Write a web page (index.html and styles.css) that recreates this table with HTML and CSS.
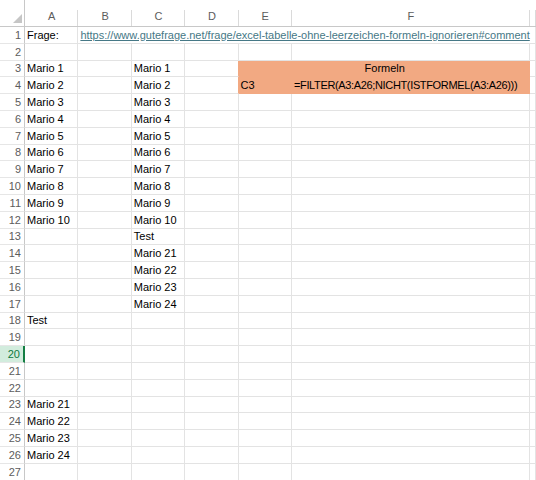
FILE: index.html
```html
<!DOCTYPE html>
<html>
<head>
<meta charset="utf-8">
<link rel="stylesheet" href="styles.css">
</head>
<body>
<div class="sheet">
  <div class="corner"><svg width="25" height="27" viewBox="0 0 25 27"><polygon points="22,14 22,23 13,23" fill="#c6c6c6"/></svg></div>
  <div class="ch">A</div><div class="ch">B</div><div class="ch">C</div><div class="ch">D</div><div class="ch">E</div><div class="ch">F</div><div class="ch"></div>

  <div class="rh">1</div><div class="c">Frage:</div><div class="c link span6">https://www.gutefrage.net/frage/excel-tabelle-ohne-leerzeichen-formeln-ignorieren#comment</div>

  <div class="rh">2</div><div class="c"></div><div class="c"></div><div class="c"></div><div class="c"></div><div class="c"></div><div class="c"></div><div class="c"></div>

  <div class="rh">3</div><div class="c">Mario 1</div><div class="c"></div><div class="c">Mario 1</div><div class="c pre-fill"></div><div class="c fill center span2">Formeln</div><div class="c"></div>

  <div class="rh">4</div><div class="c">Mario 2</div><div class="c"></div><div class="c">Mario 2</div><div class="c pre-fill"></div><div class="c fill">C3</div><div class="c fill formula">=FILTER(A3:A26;NICHT(ISTFORMEL(A3:A26)))</div><div class="c"></div>

  <div class="rh">5</div><div class="c">Mario 3</div><div class="c"></div><div class="c">Mario 3</div><div class="c"></div><div class="c"></div><div class="c"></div><div class="c"></div>
  <div class="rh">6</div><div class="c">Mario 4</div><div class="c"></div><div class="c">Mario 4</div><div class="c"></div><div class="c"></div><div class="c"></div><div class="c"></div>
  <div class="rh">7</div><div class="c">Mario 5</div><div class="c"></div><div class="c">Mario 5</div><div class="c"></div><div class="c"></div><div class="c"></div><div class="c"></div>
  <div class="rh">8</div><div class="c">Mario 6</div><div class="c"></div><div class="c">Mario 6</div><div class="c"></div><div class="c"></div><div class="c"></div><div class="c"></div>
  <div class="rh">9</div><div class="c">Mario 7</div><div class="c"></div><div class="c">Mario 7</div><div class="c"></div><div class="c"></div><div class="c"></div><div class="c"></div>
  <div class="rh">10</div><div class="c">Mario 8</div><div class="c"></div><div class="c">Mario 8</div><div class="c"></div><div class="c"></div><div class="c"></div><div class="c"></div>
  <div class="rh">11</div><div class="c">Mario 9</div><div class="c"></div><div class="c">Mario 9</div><div class="c"></div><div class="c"></div><div class="c"></div><div class="c"></div>
  <div class="rh">12</div><div class="c">Mario 10</div><div class="c"></div><div class="c">Mario 10</div><div class="c"></div><div class="c"></div><div class="c"></div><div class="c"></div>
  <div class="rh">13</div><div class="c"></div><div class="c"></div><div class="c">Test</div><div class="c"></div><div class="c"></div><div class="c"></div><div class="c"></div>
  <div class="rh">14</div><div class="c"></div><div class="c"></div><div class="c">Mario 21</div><div class="c"></div><div class="c"></div><div class="c"></div><div class="c"></div>
  <div class="rh">15</div><div class="c"></div><div class="c"></div><div class="c">Mario 22</div><div class="c"></div><div class="c"></div><div class="c"></div><div class="c"></div>
  <div class="rh">16</div><div class="c"></div><div class="c"></div><div class="c">Mario 23</div><div class="c"></div><div class="c"></div><div class="c"></div><div class="c"></div>
  <div class="rh">17</div><div class="c"></div><div class="c"></div><div class="c">Mario 24</div><div class="c"></div><div class="c"></div><div class="c"></div><div class="c"></div>
  <div class="rh">18</div><div class="c">Test</div><div class="c"></div><div class="c"></div><div class="c"></div><div class="c"></div><div class="c"></div><div class="c"></div>
  <div class="rh">19</div><div class="c"></div><div class="c"></div><div class="c"></div><div class="c"></div><div class="c"></div><div class="c"></div><div class="c"></div>
  <div class="rh active">20</div><div class="c"></div><div class="c"></div><div class="c"></div><div class="c"></div><div class="c"></div><div class="c"></div><div class="c"></div>
  <div class="rh">21</div><div class="c"></div><div class="c"></div><div class="c"></div><div class="c"></div><div class="c"></div><div class="c"></div><div class="c"></div>
  <div class="rh">22</div><div class="c"></div><div class="c"></div><div class="c"></div><div class="c"></div><div class="c"></div><div class="c"></div><div class="c"></div>
  <div class="rh">23</div><div class="c">Mario 21</div><div class="c"></div><div class="c"></div><div class="c"></div><div class="c"></div><div class="c"></div><div class="c"></div>
  <div class="rh">24</div><div class="c">Mario 22</div><div class="c"></div><div class="c"></div><div class="c"></div><div class="c"></div><div class="c"></div><div class="c"></div>
  <div class="rh">25</div><div class="c">Mario 23</div><div class="c"></div><div class="c"></div><div class="c"></div><div class="c"></div><div class="c"></div><div class="c"></div>
  <div class="rh">26</div><div class="c">Mario 24</div><div class="c"></div><div class="c"></div><div class="c"></div><div class="c"></div><div class="c"></div><div class="c"></div>
  <div class="rh">27</div><div class="c"></div><div class="c"></div><div class="c"></div><div class="c"></div><div class="c"></div><div class="c"></div><div class="c"></div>
</div>
</body>
</html>
```

FILE: styles.css
```css
html, body {
  margin: 0;
  padding: 0;
  background: #ffffff;
  overflow: hidden;
}

.sheet {
  display: grid;
  grid-template-columns: 25px 53.4px 53.4px 53.4px 53.4px 53.4px 238px 6px;
  grid-template-rows: 27px;
  grid-auto-rows: 16.8px;
  width: 536px;
  font-family: "Liberation Sans", Arial, sans-serif;
  font-size: 11px;
  color: #000000;
}

.corner {
  box-sizing: border-box;
  border-right: 1px solid #c8c8c8;
  border-bottom: 1px solid #c8c8c8;
}

.corner svg {
  display: block;
}

.ch {
  box-sizing: border-box;
  border-bottom: 1px solid #c8c8c8;
  background: linear-gradient(#dadada, #dadada) right bottom / 1px 16px no-repeat;
  color: #5c5c5c;
  display: flex;
  align-items: flex-end;
  justify-content: center;
  line-height: 14px;
  padding-bottom: 3px;
}

.rh {
  box-sizing: border-box;
  border-right: 1px solid #c8c8c8;
  border-bottom: 1px solid #e6e6e6;
  color: #5c5c5c;
  display: flex;
  align-items: flex-end;
  justify-content: flex-end;
  padding-right: 3px;
  padding-bottom: 1px;
  line-height: 14px;
}

.rh.active {
  background: #d2ecdd;
  color: #0e7a3f;
  border-right: 2px solid #137e43;
}

.c {
  box-sizing: border-box;
  border-right: 1px solid #e3e3e3;
  border-bottom: 1px solid #e3e3e3;
  display: flex;
  align-items: flex-end;
  padding-left: 2px;
  padding-bottom: 1px;
  line-height: 14px;
  white-space: nowrap;
  overflow: hidden;
}

.link {
  color: #467886;
  text-decoration: underline;
}

.formula {
  letter-spacing: -0.35px;
}

.span6 {
  grid-column: span 6;
}

.span2 {
  grid-column: span 2;
}

.fill {
  background: #f2a982;
  border-right-color: #f2a982;
  border-bottom-color: #f2a982;
}

.pre-fill {
  border-right-color: #f2a982;
}

.center {
  justify-content: center;
}
```
